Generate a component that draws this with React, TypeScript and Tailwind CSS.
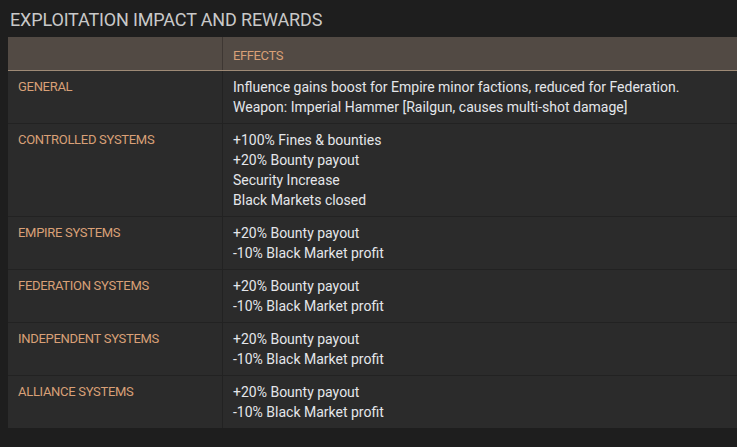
const rows = [
  {
    label: "GENERAL",
    effects: [
      "Influence gains boost for Empire minor factions, reduced for Federation.",
      "Weapon: Imperial Hammer [Railgun, causes multi-shot damage]",
    ],
  },
  {
    label: "CONTROLLED SYSTEMS",
    effects: [
      "+100% Fines & bounties",
      "+20% Bounty payout",
      "Security Increase",
      "Black Markets closed",
    ],
  },
  { label: "EMPIRE SYSTEMS", effects: ["+20% Bounty payout", "-10% Black Market profit"] },
  { label: "FEDERATION SYSTEMS", effects: ["+20% Bounty payout", "-10% Black Market profit"] },
  { label: "INDEPENDENT SYSTEMS", effects: ["+20% Bounty payout", "-10% Black Market profit"] },
  { label: "ALLIANCE SYSTEMS", effects: ["+20% Bounty payout", "-10% Black Market profit"] },
];

export default function App() {
  return (
    <div className="w-[737px] h-[447px] overflow-hidden bg-[#1e1e1e] font-['Roboto',sans-serif]">
      <h2 className="pl-[10px] pt-[9px] h-[37px] text-[18px] leading-[22px] tracking-[-0.15px] text-[#c9c9c9]">
        EXPLOITATION IMPACT AND REWARDS
      </h2>
      <div className="ml-[8px] bg-[#2b2b2b]">
        <div className="grid grid-cols-[215px_1fr] bg-[#524a44] border-b border-[#9e8a76]">
          <div className="border-r border-[#3e3733] h-[33px]" />
          <div className="pl-[10px] pt-[9px] pb-[4px] text-[13px] leading-[20px] tracking-[-0.4px] text-[#d9a077]">
            EFFECTS
          </div>
        </div>
        {rows.map((r, i) => (
          <div
            key={r.label}
            className={
              i < rows.length - 1
                ? "grid grid-cols-[215px_1fr] border-b border-[#222222]"
                : "grid grid-cols-[215px_1fr]"
            }
          >
            <div className="border-r border-[#222222] pl-[10px] py-[6px] text-[13px] leading-[20px] tracking-[-0.3px] text-[#d9a077]">
              {r.label}
            </div>
            <div className="pl-[10px] py-[6px] text-[14px] leading-[20px] text-[#e4e6ea]">
              {r.effects.map((e) => (
                <div key={e}>{e}</div>
              ))}
            </div>
          </div>
        ))}
      </div>
    </div>
  );
}
